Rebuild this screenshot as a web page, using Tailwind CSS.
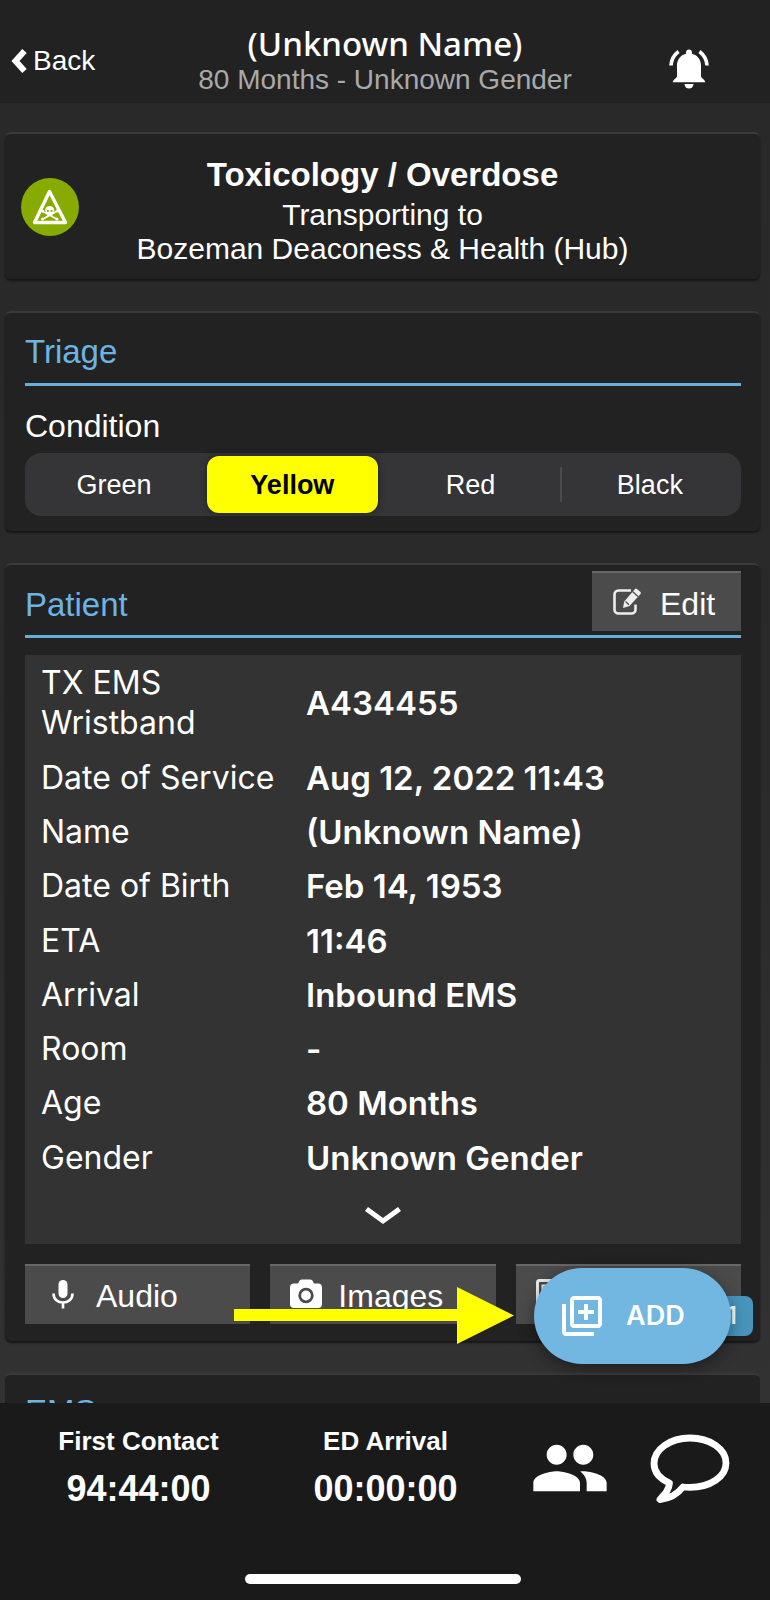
<!DOCTYPE html>
<html lang="en">
<head>
<meta charset="utf-8">
<meta name="viewport" content="width=device-width, initial-scale=1">
<title>Patient record</title>
<script src="https://cdn.jsdelivr.net/npm/@tailwindcss/browser@4"></script>
</head>
<body class="flex h-screen flex-col overflow-hidden bg-[#2a2a2a] font-['Liberation_Sans',Arial,sans-serif] text-white">

<header class="grid shrink-0 grid-cols-[110px_1fr_110px] items-start bg-[#222222] pt-6 pb-[7px]">
  <a href="#" class="mt-[21px] flex items-center pl-[11px] text-[28px] leading-8">
    <svg class="mr-1.5 h-6 w-4" viewBox="0 0 16 24" fill="none" stroke="currentColor" stroke-width="6"><path d="M13.500 2 4.500 12l9 10"/></svg>
    Back
  </a>
  <div class="text-center">
    <h1 class="font-['Noto_Sans',sans-serif] text-[33px] leading-10 font-medium">(Unknown Name)</h1>
    <p class="text-[28px] leading-8 text-[#a9a9a9]">80 Months - Unknown Gender</p>
  </div>
  <button type="button" aria-label="Notifications" class="mt-[25px] ml-[9px] h-10 w-10">
    <svg class="h-10 w-10" viewBox="0 0 40 40" fill="currentColor">
      <path d="M20 .5c1.800 0 3 1.300 3 3v1.300c5.500 1.400 9 6 9 11.700v10.500c0 2 3.800 3.500 4.300 6.200H3.700C4.200 30.500 8 29 8 27V16.500C8 10.800 11.500 6.200 17 4.800V3.500c0-1.700 1.200-3 3-3z"/>
      <path d="M15.500 35h9a4.500 4.500 0 0 1-9 0z"/>
      <path d="M9.500 2.500C5 6 2.300 11 2 16.500M30.500 2.500C35 6 37.700 11 38 16.500" fill="none" stroke="currentColor" stroke-width="3.600"/>
    </svg>
  </button>
</header>

<div class="relative min-h-0 flex-1 overflow-hidden bg-linear-to-b from-[#292929] via-[#2a2a2a] to-[#323232]">
  <main class="flex flex-col gap-8 pt-[29px] pr-[10px] pl-[5px]">

    <section class="grid grid-cols-[58px_1fr_58px] items-start rounded-md border-t-2 border-[#3a3a3a] bg-[#222222] px-4 pt-[21px] pb-[13px] shadow-[0_2px_2px_#161616]">
      <svg class="mt-[23px] h-[58px] w-[58px]" viewBox="0 0 58 58" role="img" aria-label="Toxic hazard">
        <circle cx="29" cy="29" r="29" fill="#87ab00"/>
        <path d="M28.500 13.500 13.500 44.500h31z" fill="none" stroke="#fff" stroke-width="3.400" stroke-linejoin="round"/>
        <path d="M22 33.500 35.500 41M35.500 33.500 22 41" stroke="#fff" stroke-width="1.600" stroke-linecap="round"/>
        <g fill="#fff">
          <circle cx="21.500" cy="33" r="1.500"/><circle cx="36" cy="33" r="1.500"/>
          <circle cx="21.500" cy="41" r="1.500"/><circle cx="36" cy="41" r="1.500"/>
          <path d="M28.700 28c-2.700 0-4.500 1.800-4.500 4.200 0 1.600.7 2.600 1.900 3.200v2.600h5.200v-2.600c1.200-.6 1.900-1.600 1.900-3.200 0-2.400-1.800-4.200-4.500-4.200z"/>
        </g>
        <circle cx="26.900" cy="33" r="1.100" fill="#87ab00"/><circle cx="30.500" cy="33" r="1.100" fill="#87ab00"/>
      </svg>
      <div class="text-center text-[30px] leading-[34px]">
        <h2 class="mb-[3px] text-[33px] leading-10 font-bold">Toxicology / Overdose</h2>
        <p>Transporting to</p>
        <p>Bozeman Deaconess &amp; Health (Hub)</p>
      </div>
    </section>

    <section class="rounded-md border-t-2 border-[#3a3a3a] bg-[#222222] pr-[19px] pb-[15px] pl-5 shadow-[0_2px_2px_#161616]">
      <div class="flex h-[73px] items-center border-b-3 border-[#67aedb]">
        <h2 class="pt-2 text-[33px] leading-10 text-[#6cb4e4]">Triage</h2>
      </div>
      <fieldset>
        <legend class="pt-5 text-[32px] leading-10">Condition</legend>
        <div class="mt-[7px] grid h-[63px] grid-cols-4 rounded-2xl bg-[#353538] py-[3px] pr-[3px] text-center text-[27px] leading-8">
          <label class="flex items-center justify-center"><input type="radio" name="condition" class="sr-only">Green</label>
          <label class="mx-1 flex items-center justify-center rounded-xl bg-[#ffff00] font-bold text-black shadow-[0_0_6px_#222222]"><input type="radio" name="condition" class="sr-only" checked>Yellow</label>
          <label class="flex items-center justify-center"><input type="radio" name="condition" class="sr-only">Red</label>
          <label class="my-[11px] flex items-center justify-center border-l-2 border-[#4b4b4e]"><input type="radio" name="condition" class="sr-only">Black</label>
        </div>
      </fieldset>
    </section>

    <section class="rounded-md border-t-2 border-[#3a3a3a] bg-[#222222] pr-[19px] pb-[17px] pl-5 shadow-[0_2px_2px_#161616]">
      <div class="flex h-[73px] items-center justify-between border-b-3 border-[#67aedb] pt-px">
        <h2 class="pt-2 text-[33px] leading-10 text-[#6cb4e4]">Patient</h2>
        <button type="button" class="flex h-[60px] w-[149px] items-center border-t-2 border-[#686868] bg-[#4b4b4b] pt-1 pl-5 text-[32px] leading-10">
          <svg class="mr-[18px] h-[30px] w-[30px] -translate-y-0.5" viewBox="0 0 30 30" fill="none" stroke="#eeeeee">
            <path d="M19 3.500H6.500a4 4 0 0 0-4 4v15a4 4 0 0 0 4 4h13a4 4 0 0 0 4-4v-5" stroke-width="2.600"/>
            <path d="m11 21 1.200-6.500L23 2a1.500 1.500 0 0 1 2 0l3.500 3a1.500 1.500 0 0 1 0 2L17.500 19z" fill="#eeeeee" stroke="none"/>
            <path d="m20.500 4.500 5.500 5M13.500 14.500l3.500 3.200" stroke="#4b4b4b" stroke-width="1.200"/>
          </svg>
          Edit
        </button>
      </div>

      <div class="mt-[17px] bg-[#333333] pt-px font-['Inter',sans-serif] text-[32px] leading-10">
        <table class="h-[529px] w-full text-left">
          <tbody>
            <tr><th scope="row" class="w-[281px] py-[7px] pr-4 pl-4 font-normal">TX EMS<br>Wristband</th><td class="text-[33px] font-semibold">A434455</td></tr>
            <tr><th scope="row" class="py-[7px] pl-4 font-normal">Date of Service</th><td class="text-[33px] font-semibold">Aug 12, 2022 11:43</td></tr>
            <tr><th scope="row" class="py-[7px] pl-4 font-normal">Name</th><td class="text-[33px] font-semibold">(Unknown Name)</td></tr>
            <tr><th scope="row" class="py-[7px] pl-4 font-normal">Date of Birth</th><td class="text-[33px] font-semibold">Feb 14, 1953</td></tr>
            <tr><th scope="row" class="py-[7px] pl-4 font-normal">ETA</th><td class="text-[33px] font-semibold">11:46</td></tr>
            <tr><th scope="row" class="py-[7px] pl-4 font-normal">Arrival</th><td class="text-[33px] font-semibold">Inbound EMS</td></tr>
            <tr><th scope="row" class="py-[7px] pl-4 font-normal">Room</th><td class="text-[33px] font-semibold">-</td></tr>
            <tr><th scope="row" class="py-[7px] pl-4 font-normal">Age</th><td class="text-[33px] font-semibold">80 Months</td></tr>
            <tr><th scope="row" class="py-[7px] pl-4 font-normal">Gender</th><td class="text-[33px] font-semibold">Unknown Gender</td></tr>
          </tbody>
        </table>
        <button type="button" aria-label="Show more" class="flex h-[59px] w-full items-center justify-center pt-1">
          <svg class="h-5 w-9" viewBox="0 0 36 20" fill="none" stroke="currentColor" stroke-width="5"><path d="m1.500 2 16.500 12L34.500 2"/></svg>
        </button>
      </div>

      <div class="mt-5 grid grid-cols-3 gap-5 text-[32px] leading-10">
        <button type="button" class="flex h-[60px] items-center border-t-2 border-[#686868] bg-[#4b4b4b] pt-0.5 pl-[27px]">
          <svg class="mr-[22px] h-[30px] w-[22px] -translate-y-0.5" viewBox="0 0 22 30" fill="none" stroke="currentColor">
            <rect x="6.500" y="1" width="9" height="18" rx="4.500" fill="currentColor" stroke="none"/>
            <path d="M1.500 14.500c0 6 4.500 9 9.500 9s9.500-3 9.500-9M11 23.500v6" stroke-width="2.600"/>
          </svg>
          Audio
        </button>
        <button type="button" class="flex h-[60px] items-center border-t-2 border-[#686868] bg-[#4b4b4b] pt-0.5 pl-[19px]">
          <svg class="mr-[15px] h-[30px] w-[34px] -translate-y-0.5" viewBox="0 0 34 30">
            <path d="M13 .5h8c1.500 0 2.500.7 3 2l.8 2H29a4 4 0 0 1 4 4v16.500a4 4 0 0 1-4 4H5a4 4 0 0 1-4-4V8.500a4 4 0 0 1 4-4h4.200l.8-2c.5-1.300 1.500-2 3-2z" fill="currentColor"/>
            <circle cx="17" cy="16.500" r="6.300" fill="currentColor" stroke="#4b4b4b" stroke-width="2.800"/>
          </svg>
          Images
        </button>
        <button type="button" aria-label="Files" class="flex h-[60px] items-center border-t-2 border-[#686868] bg-[#4b4b4b] pt-0.5 pl-5">
          <svg class="h-[30px] w-[30px] -translate-y-0.5" viewBox="0 0 30 30" fill="none" stroke="#eeeeee">
            <rect x="1.500" y="1.500" width="27" height="27" rx="2" stroke-width="3"/>
            <path d="M6.500 25V6.500H24M11 11h10M11 16h10" stroke-width="2"/>
          </svg>
        </button>
      </div>
    </section>

    <section class="rounded-t-md border-t-2 border-[#3a3a3a] bg-[#222222] pr-[19px] pl-5">
      <div class="h-[73px] border-b-3 border-[#67aedb]">
        <h2 class="pt-[17px] text-[33px] leading-10 text-[#6cb4e4]">EMS</h2>
      </div>
    </section>
  </main>

  <!-- Pointer toward the floating action -->
  <svg class="absolute right-[256px] bottom-[59px] h-[57px] w-[280px]" viewBox="0 0 280 57" fill="#ffff00" aria-hidden="true">
    <path d="M0 22h223V0l57 28.500L223 57V34H0z"/>
  </svg>

  <span class="absolute right-[17px] bottom-[67px] flex h-10 w-[38px] items-center justify-end rounded-lg bg-[#4795bd] pr-4 font-['Inter',sans-serif] text-2xl font-semibold">1</span>
  <button type="button" class="absolute right-[39px] bottom-[39px] flex h-24 w-[197px] items-center rounded-full bg-[#72b6e2] pl-7 font-['Inter',sans-serif] text-[27px] leading-8 font-semibold shadow-[0_4px_16px_rgba(0,0,0,0.4)]">
    <svg class="mr-6 h-10 w-10" viewBox="2 2 20 20" fill="currentColor">
      <path d="M4 6H2v14c0 1.100.9 2 2 2h14v-2H4V6zm16-4H8c-1.100 0-2 .9-2 2v12c0 1.100.9 2 2 2h12c1.100 0 2-.9 2-2V4c0-1.100-.9-2-2-2zm0 14H8V4h12v12zm-7-2h2v-3h3V9h-3V6h-2v3h-3v2h3v3z"/>
    </svg>
    ADD
  </button>
</div>

<footer class="flex h-[197px] shrink-0 flex-col justify-between bg-[#1a1a1a] pb-4">
  <div class="grid grid-cols-[1fr_1fr_144px_104px] px-4 pt-[23px] text-center">
    <dl>
      <dt class="text-[26px] leading-[30px] font-bold">First Contact</dt>
      <dd class="mt-2 text-4xl leading-[50px] font-bold">94:44:00</dd>
    </dl>
    <dl class="pl-1">
      <dt class="text-[26px] leading-[30px] font-bold">ED Arrival</dt>
      <dd class="mt-2 text-4xl leading-[50px] font-bold">00:00:00</dd>
    </dl>
    <button type="button" aria-label="Team" class="mt-0.5 ml-6 flex h-20 w-20 items-center">
      <svg class="h-20 w-20" viewBox="0 0 24 24" fill="currentColor"><path d="M16 11c1.660 0 2.990-1.340 2.990-3S17.660 5 16 5c-1.660 0-3 1.340-3 3s1.340 3 3 3zm-8 0c1.660 0 2.990-1.340 2.990-3S9.660 5 8 5C6.340 5 5 6.340 5 8s1.340 3 3 3zm0 2c-2.330 0-7 1.170-7 3.500V19h14v-2.500c0-2.330-4.670-3.500-7-3.500zm8 0c-.29 0-.62.020-.97.050 1.160.84 1.970 1.970 1.970 3.450V19h6v-2.500c0-2.330-4.670-3.500-7-3.500z"/></svg>
    </button>
    <button type="button" aria-label="Messages" class="mt-2 flex h-[70px] w-20 items-start">
      <svg class="h-[70px] w-20" viewBox="0 0 80 70" fill="none" stroke="currentColor" stroke-width="6.800" stroke-linejoin="round"><path d="M40 4C20 4 4 15.500 4 29.500c0 8 5.500 15 15.500 19.500-.5 7-4.500 11-9.500 16.500 10-1 18-6 23-12.500 2.300.3 4.600.4 7 .4 20 0 36-10.400 36-24.400S60 4 40 4z"/></svg>
    </button>
  </div>
  <div class="mr-1 h-2.5 w-[276px] self-center rounded-full bg-white"></div>
</footer>
</body>
</html>
